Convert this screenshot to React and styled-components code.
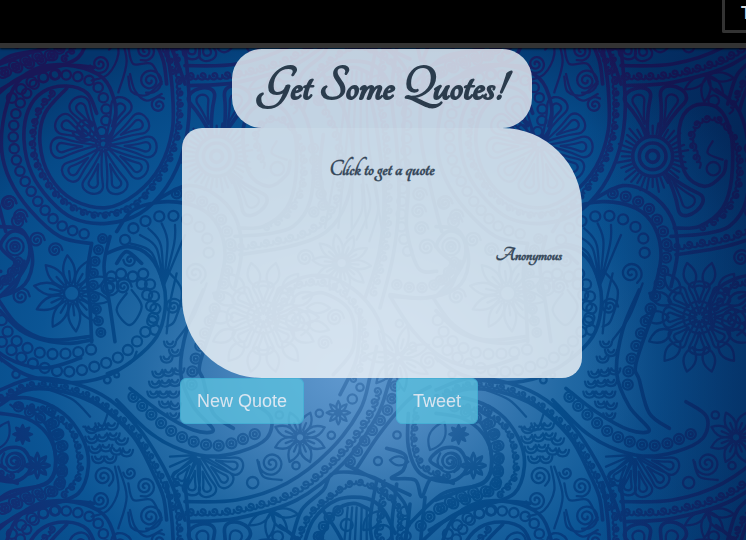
import React from "react";
import styled, { createGlobalStyle } from "styled-components";

const GlobalStyle = createGlobalStyle`
  *, *::before, *::after { box-sizing: border-box; }
  body { margin: 0; background: #04407c; color: #2c3e50; }
`;

const Page = styled.div`
  position: relative;
  isolation: isolate;
  min-height: 100vh;
  overflow: hidden;
  font-family: "Liberation Sans", Arial, sans-serif;
`;

const Backdrop = styled.svg`
  position: absolute;
  inset: 0;
  z-index: -1;
  width: 100%;
  height: 100%;
`;

const TopBar = styled.header`
  display: flex;
  justify-content: flex-end;
  align-items: flex-start;
  height: 48px;
  overflow: hidden;
  background: #000;
  border-bottom: 5px solid #333;
  box-shadow: 0 1px 2px rgba(0, 0, 0, 0.8);
`;

const MenuButton = styled.button`
  width: 56px;
  height: 33px;
  margin-right: -32px;
  padding: 0 0 4px 16px;
  border: 3px solid #333;
  border-top: 0;
  border-radius: 0 0 2px 2px;
  background: #000;
  color: #ddd;
  font: bold 18px/24px "Liberation Sans", Arial, sans-serif;
  text-align: left;
`;

const Main = styled.main`
  display: flex;
  flex-direction: column;
  align-items: center;
  padding: 1px 0 0 18px;
`;

const Title = styled.h1`
  width: 300px;
  max-width: 100%;
  margin: 0;
  padding: 16px 0 19px;
  border-radius: 30px;
  background: rgba(236, 240, 245, 0.82);
  color: #2b3c4d;
  font: bold 51px/44px Tangerine, "Liberation Serif", serif;
  -webkit-text-stroke: 2px #2b3c4d;
  text-align: center;
  white-space: nowrap;
`;

const QuoteCard = styled.section`
  width: 400px;
  max-width: 100%;
  min-height: 250px;
  padding: 28px 20px;
  border-radius: 20px 80px 20px 80px;
  background: rgba(236, 242, 247, 0.84);
  color: #2f4153;
`;

const QuoteText = styled.p`
  min-height: 86px;
  margin: 0;
  font: bold 22px/28px Tangerine, "Liberation Serif", serif;
  -webkit-text-stroke: 1px rgba(47, 65, 83, 0.7);
  text-align: center;
`;

const Author = styled(QuoteText)`
  min-height: 28px;
  font-size: 19px;
  text-align: right;
`;

const Actions = styled.div`
  display: flex;
  gap: 92px;
  width: 404px;
  max-width: 100%;
`;

const ActionButton = styled.button`
  height: 46px;
  padding: 0 16px;
  border: 1px solid #46b8da;
  border-radius: 6px;
  background: #5bc0de;
  color: #fff;
  opacity: 0.8;
  font: 18px/24px "Liberation Sans", Arial, sans-serif;
  cursor: pointer;
`;

/* ---------- paisley drawing ---------- */

const spline = (p) => {
  let d = `M${p[0]}`;
  for (let i = 0; i < p.length - 1; i++) {
    const a = p[i - 1] || p[i];
    const b = p[i];
    const c = p[i + 1];
    const e = p[i + 2] || c;
    d += `C${b[0] + (c[0] - a[0]) / 6},${b[1] + (c[1] - a[1]) / 6} ${c[0] - (e[0] - b[0]) / 6},${c[1] - (e[1] - b[1]) / 6} ${c}`;
  }
  return d;
};

const along = (p, gap) => {
  const dense = [];
  for (let i = 0; i < p.length - 1; i++) {
    const a = p[i - 1] || p[i];
    const b = p[i];
    const c = p[i + 1];
    const e = p[i + 2] || c;
    for (let s = 0; s < 60; s++) {
      const t = s / 60;
      dense.push([0, 1].map((k) =>
        0.5 * (2 * b[k] + (c[k] - a[k]) * t + (2 * a[k] - 5 * b[k] + 4 * c[k] - e[k]) * t * t + (3 * b[k] - a[k] - 3 * c[k] + e[k]) * t * t * t)
      ));
    }
  }
  const out = [];
  let run = gap;
  for (let i = 1; i < dense.length; i++) {
    const dx = dense[i][0] - dense[i - 1][0];
    const dy = dense[i][1] - dense[i - 1][1];
    run += Math.hypot(dx, dy);
    if (run >= gap) {
      out.push([dense[i][0], dense[i][1], Math.atan2(dy, dx)]);
      run -= gap;
    }
  }
  return out;
};

const circle = (x, y, r) => `M${x - r},${y}a${r},${r} 0 1 0 ${2 * r},0a${r},${r} 0 1 0 ${-2 * r},0`;

const spiral = (x, y, r, turns = 2, start = 0) => {
  const pts = [];
  const n = Math.ceil(turns * 10);
  for (let i = 0; i <= n; i++) {
    const t = i / n;
    const a = start + t * turns * Math.PI * 2;
    pts.push([x + Math.cos(a) * r * (0.12 + 0.88 * t), y + Math.sin(a) * r * (0.12 + 0.88 * t)]);
  }
  return spline(pts);
};

const petal = (x, y, a, from, len, w, pointed) => {
  const q = (u, v) => `${x + Math.cos(a) * u - Math.sin(a) * v},${y + Math.sin(a) * u + Math.cos(a) * v}`;
  return pointed
    ? `M${q(from, 0)}C${q(from + len * 0.3, w)} ${q(from + len * 0.65, w)} ${q(from + len, 0)}C${q(from + len * 0.65, -w)} ${q(from + len * 0.3, -w)} ${q(from, 0)}`
    : `M${q(from, 0)}C${q(from + len * 0.7, w * 0.6)} ${q(from + len * 0.7, w)} ${q(from + len * 0.82, w)}C${q(from + len * 1.06, w)} ${q(from + len * 1.06, -w)} ${q(from + len * 0.82, -w)}C${q(from + len * 0.7, -w)} ${q(from + len * 0.7, -w * 0.6)} ${q(from, 0)}`;
};

const beads = (p, gap = 36, r = 12) => along(p, gap).map(([x, y]) => circle(x, y, r)).join("");
const rings = (p, gap = 37, r = 14) => along(p, gap).map(([x, y]) => circle(x, y, r) + circle(x, y, r * 0.4)).join("");
const scrolls = (p, gap = 34, r = 12) =>
  along(p, gap).map(([x, y, a]) => {
    const end = a + Math.PI;
    return spiral(x, y, r, 1.3, end - 1.3 * Math.PI * 2) + `M${x + Math.cos(end) * r},${y + Math.sin(end) * r}Q${x + Math.cos(a + 2.2) * r * 1.7},${y + Math.sin(a + 2.2) * r * 1.7} ${x + Math.cos(a + 3) * gap * 0.9},${y + Math.sin(a + 3) * gap * 0.9}`;
  }).join("");

const daisy = (x, y, r, n = 8, w = 0.24, core = 0.18, turn = 0) => {
  let d = core ? circle(x, y, r * core) : "";
  for (let i = 0; i < n; i++) {
    const a = turn + (i * Math.PI * 2) / n;
    d += petal(x, y, a, r * core, r * (1 - core), r * w, true);
    if (r > 50) d += `M${x + Math.cos(a) * r * 0.3},${y + Math.sin(a) * r * 0.3}L${x + Math.cos(a) * r * 0.58},${y + Math.sin(a) * r * 0.58}`;
  }
  return d;
};

const fan = (x, y, tips, w = 30) =>
  tips.map(([tx, ty]) => {
    const a = Math.atan2(ty - y, tx - x);
    const len = Math.hypot(tx - x, ty - y);
    return petal(x, y, a, len * 0.1, len * 0.9, w, false) + petal(x, y, a, len * 0.4, len * 0.48, w * 0.45, false);
  }).join("");

const scales = (cells, r = 17) =>
  cells.map(([x, y]) => `M${x - r},${y}q2,${r} ${r},${r}q${r - 2},0 ${r},${-r}M${x - r / 2},${y}q2,8 ${r / 2},8q${r / 2 - 2},0 ${r / 2},-8`).join("");

/* Each motif group is drawn at three times its final size. */
const motifs = [
  {
    x: 0, y: 40,
    bold: [
      spline([[500, 20], [517, 150], [517, 270], [480, 380], [410, 460], [320, 503], [220, 480], [150, 410], [120, 310], [135, 220], [200, 145]]),
      spline([[555, 20], [568, 200], [550, 330], [500, 440], [420, 520], [320, 550], [220, 535], [150, 480], [95, 400], [72, 300], [85, 210], [130, 155], [200, 138], [262, 160], [290, 220]]),
      spline([[318, 320], [343, 260], [345, 190], [310, 115], [220, 78], [120, 82], [50, 130], [14, 220], [5, 330], [30, 420], [90, 510], [180, 590], [270, 610]]),
      spline([[350, 575], [400, 510], [500, 485], [600, 505], [655, 560], [675, 650], [650, 770]]),
      spline([[470, 480], [560, 437], [640, 460], [705, 530], [725, 630], [705, 740]]),
      spline([[330, 590], [312, 680], [330, 800], [345, 905]]),
      spline([[275, 610], [262, 700], [270, 800], [275, 905]]),
      spline([[350, 670], [380, 635], [425, 670]]),
      spline([[0, 560], [65, 570], [90, 630], [65, 700], [0, 770]]),
    ],
    fine: [
      fan(310, 315, [[375, 175], [442, 238], [470, 322], [438, 400], [360, 460], [272, 460], [195, 412], [152, 325], [170, 240], [225, 175]], 31),
      circle(310, 312, 22), circle(310, 312, 11),
      scrolls([[530, 20], [542, 200], [525, 320], [475, 420], [400, 500], [300, 528], [210, 500], [140, 430], [97, 330], [110, 220], [165, 148]]),
      beads([[305, 275], [318, 240], [318, 205], [300, 150], [265, 120], [200, 105], [130, 112], [80, 160], [48, 220], [40, 300], [55, 380], [85, 440], [130, 505], [190, 560], [265, 585]], 35, 14),
      spiral(255, 268, 38, 2.3, 1), spiral(476, 195, 25, 1.7, 1),
      spiral(165, 630, 22, 2), spiral(25, 490, 24, 2), spiral(55, 545, 24, 2), spiral(110, 600, 24, 2),
      spline([[385, 110], [395, 155], [440, 165], [485, 125]]),
      rings([[308, 595], [285, 665], [280, 740], [295, 840], [310, 910]], 36, 13),
      beads([[375, 600], [405, 560], [445, 540], [490, 527], [535, 530], [575, 545], [612, 575], [627, 620], [620, 670]], 43, 15),
      rings([[530, 460], [570, 470], [632, 500], [672, 555], [692, 620], [680, 700], [650, 790], [615, 880], [580, 980], [575, 1040]], 40, 15),
      ...[[390, 610], [420, 585], [445, 565], [485, 550], [525, 555], [555, 585]].map(([x, y]) => spline([[x, y], [(x + 520) / 2, (y + 650) / 2 + 8], [490, 740]])),
      daisy(215, 760, 115, 10, 0.2, 0.2, 0.2),
      circle(45, 620, 26), circle(45, 620, 14), circle(45, 620, 6),
      rings([[55, 665], [30, 705], [-10, 740]], 35, 13),
      beads([[325, 745], [340, 700], [375, 705], [410, 715], [435, 750], [455, 805], [465, 870]], 36, 15),
      spiral(390, 660, 20, 1.5), spiral(370, 740, 25, 2), spiral(585, 700, 34, 2, 1), spiral(520, 800, 26, 2),
      spline([[530, 700], [510, 790], [500, 880]]), spline([[620, 730], [580, 830], [530, 900]]),
    ],
  },
  {
    x: 0, y: 290,
    bold: [
      spline([[0, 62], [60, 120], [130, 150], [210, 160], [275, 150]]),
      spline([[0, 205], [80, 255], [200, 278], [310, 262], [400, 210], [470, 140], [495, 60], [490, -20], [450, -100], [385, -130], [320, -110]]),
      spline([[0, 300], [100, 265], [220, 280], [330, 330], [420, 420], [490, 530], [530, 620], [555, 690]]),
      spline([[0, 345], [80, 300], [190, 305], [300, 350], [400, 440], [460, 550], [490, 620], [500, 690]]),
      spline([[0, 330], [90, 325], [190, 370], [250, 450], [265, 530], [235, 610], [150, 645], [60, 675], [-20, 720]]),
      spline([[0, 370], [80, 385], [140, 430], [167, 500], [150, 570], [80, 600], [0, 630]]),
      spline([[350, 330], [440, 420], [520, 470], [620, 498], [720, 485], [800, 445], [812, 380], [750, 335]]),
      spline([[390, 295], [480, 365], [580, 420], [640, 420], [580, 350], [542, 250], [560, 120], [610, 0]]),
      spline([[700, 415], [640, 370], [610, 270], [600, 220], [655, 60]]),
    ],
    fine: [
      beads([[5, 90], [30, 135], [75, 170], [130, 190], [210, 190], [290, 175]], 39, 15),
      beads([[5, 155], [60, 200], [110, 225], [170, 243], [230, 243], [290, 228], [350, 205], [400, 165], [440, 120], [465, 70], [460, 10], [440, -35], [410, -70]], 38, 15),
      scrolls([[0, 322], [90, 283], [205, 292], [310, 340], [410, 430], [475, 540], [512, 620], [525, 685]]),
      scrolls([[60, 345], [140, 360], [210, 410], [238, 480], [238, 560], [190, 620]], 33, 12),
      rings([[55, 350], [105, 375], [160, 410], [187, 460], [188, 520], [180, 580], [150, 610], [100, 625], [0, 660]], 37, 14),
      rings([[400, 320], [450, 370], [525, 430], [600, 460], [675, 465], [770, 430]], 38, 15),
      spiral(40, 515, 37, 2.3, 2), daisy(68, 433, 28, 8, 0.2, 0), daisy(112, 525, 37, 8, 0.2, 0),
      circle(48, 253, 11), circle(322, 270, 10), circle(350, 255, 7),
      spiral(310, 560, 32, 2, 1), spiral(435, 590, 31, 2, 2), spiral(300, 630, 30, 2, 3), spiral(450, 680, 38, 2.3), spiral(390, 548, 20, 1.5),
      spline([[345, 530], [355, 600], [325, 660], [275, 680]]), spline([[355, 530], [380, 620], [355, 715]]),
      spline([[385, 580], [400, 630], [455, 630], [485, 690]]), spline([[390, 660], [405, 710], [440, 740], [485, 720]]),
      scales([[275, 410], [305, 400], [335, 400], [275, 440], [307, 435], [340, 430], [365, 445], [285, 470], [318, 465], [350, 475], [380, 480], [295, 500], [330, 500]], 19),
      scales([[510, 155], [525, 180], [500, 200], [475, 245], [505, 240], [535, 235], [465, 275], [495, 272], [525, 270], [460, 305], [490, 305], [520, 305], [495, 335], [525, 340], [520, 370]], 18),
      spline([[150, 300], [220, 330], [270, 380]]), spline([[250, 410], [300, 420], [325, 365]]), spline([[320, 250], [390, 220], [410, 185]]),
      spline([[395, 0], [425, 50], [390, 105], [350, 60], [380, 10]]), spline([[500, -60], [545, 0], [525, 90], [500, 110]]),
      circle(330, -10, 26), circle(330, -10, 12),
    ],
  },
  {
    x: 180, y: 128,
    bold: [
      spline([[175, 300], [250, 295], [320, 240], [347, 150], [345, 20], [305, -60], [230, -65], [190, 0], [205, 130], [265, 175], [320, 140], [330, 100]]),
      spline([[165, 325], [260, 318], [340, 295], [390, 220], [400, 80], [370, -50], [300, -115]]),
      spline([[180, 380], [330, 355], [440, 310], [500, 220], [520, 80], [490, -60], [430, -160]]),
      spline([[590, -250], [570, -120], [590, 0], [612, 200], [598, 370], [555, 510]]),
      spline([[650, -240], [635, -100], [650, 50], [657, 220], [640, 380], [600, 540]]),
      spline([[290, 600], [285, 510], [350, 455], [440, 445], [540, 500], [605, 600], [620, 750]]),
      spline([[370, 510], [430, 495], [510, 550], [520, 660], [460, 740]]),
      spline([[430, 20], [420, 130], [440, 240]]),
      spline([[540, 560], [530, 690], [480, 800]]),
      spline([[630, 505], [700, 610], [790, 690], [900, 720], [1010, 690]]),
      spline([[635, 505], [740, 510], [810, 480], [840, 400]]),
      circle(110, 85, 60), circle(110, 85, 40), circle(110, 85, 18),
      petal(110, 85, -1.82, 65, 145, 40, false), petal(110, 85, -1.24, 65, 155, 40, false), petal(110, 85, 0.9, 65, 145, 42, false),
    ],
    fine: [
      petal(110, 85, -1.82, 100, 90, 18, false), petal(110, 85, -1.24, 100, 95, 18, false), petal(110, 85, 0.9, 100, 90, 20, false),
      ...Array.from({ length: 36 }, (_, i) => {
        const a = (i * Math.PI) / 18;
        return `M${110 + 68 * Math.cos(a)},${85 + 68 * Math.sin(a)}L${110 + (92 + (i % 3) * 8) * Math.cos(a)},${85 + (92 + (i % 3) * 8) * Math.sin(a)}`;
      }),
      scrolls([[240, 90], [225, 20], [260, -25], [320, -20], [368, 60], [368, 180], [320, 265], [250, 305]], 36, 13),
      scrolls([[180, 355], [290, 337], [380, 310], [450, 250], [480, 150], [465, 20], [400, -110]], 38, 14),
      rings([[400, 60], [415, 170], [430, 230], [385, 260]], 35, 14),
      spline([[290, 40], [275, 75], [320, 95]]), circle(292, 122, 20),
      scrolls([[615, -220], [602, -100], [620, 20], [628, 200], [618, 360], [575, 520]], 36, 14),
      beads([[675, -160], [680, 20], [668, 180], [665, 300], [690, 390]], 38, 14),
      daisy(485, 405, 88, 10, 0.2, 0.18, 0.1), spiral(375, 390, 26, 2), spiral(465, 570, 27, 2), spiral(433, 645, 22, 2), spiral(350, 580, 44, 2.2),
      ...Array.from({ length: 14 }, (_, i) => petal(250, 568, i * 0.449, 92, 75, 24, true)),
      fan(250, 568, [[250, 460], [330, 490], [360, 568], [330, 645], [250, 680], [170, 645], [140, 568], [170, 490]], 31),
      circle(250, 568, 48), circle(250, 568, 30), circle(250, 568, 15),
      scrolls([[310, 520], [350, 470], [440, 465], [520, 520], [555, 600], [550, 700], [510, 770]], 36, 14),
      spline([[545, 170], [545, 250], [500, 330]]), spline([[560, 170], [570, 240], [530, 335]]), spline([[580, 140], [595, 240], [568, 340]]),
      petal(380, 540, 0, 0, 70, 20, true), petal(380, 585, 0.3, 0, 70, 20, true),
    ],
  },
  {
    x: 340, y: 128,
    bold: [
      spline([[210, -180], [190, 20], [205, 170], [200, 300], [235, 420], [290, 430]]),
      spline([[255, -200], [240, 0], [270, 170], [305, 310]]),
      spline([[150, 500], [250, 510], [350, 480], [385, 410], [370, 330], [325, 310], [290, 355], [335, 400]]),
      spline([[280, 510], [340, 590], [430, 635], [560, 625]]),
    ],
    fine: [
      spiral(238, 200, 23, 2), spiral(235, 250, 23, 2), spiral(243, 302, 22, 2), spiral(260, 358, 26, 2), spiral(350, 505, 27, 2), spiral(315, 225, 22, 2), spiral(348, 265, 22, 2),
      rings([[170, 470], [235, 480], [310, 458], [350, 400]], 38, 14),
      circle(218, 655, 11), circle(178, 587, 11), spiral(265, 700, 28, 2),
      daisy(175, 690, 100, 7, 0.2, 0.1, -1.3),
      ...[-110, -70, -30, 15, 60].map((x) => spline([[60 + x / 3, -170], [55 + x / 2, 40], [65 + x, 300]])),
    ],
  },
  {
    x: 170, y: 360,
    bold: [
      spline([[45, 425], [200, 420], [350, 370], [480, 270], [570, 150], [600, 50], [620, -40]]),
      spline([[55, 485], [200, 475], [380, 420], [520, 310], [620, 170], [660, 60], [690, 0]]),
      spline([[365, 540], [395, 450], [460, 390], [490, 340], [590, 345], [670, 390], [715, 460], [700, 560]]),
      spline([[400, 560], [430, 480], [500, 420], [590, 415], [640, 450], [675, 520]]),
      spline([[450, 540], [495, 455], [550, 430], [600, 450]]),
      spline([[560, 325], [630, 220], [715, 120], [780, 80]]),
      spline([[715, 160], [715, 260], [750, 340], [840, 365], [890, 325], [870, 270], [820, 265], [780, 300], [815, 325]]),
      spline([[650, 265], [705, 285], [700, 330], [665, 355], [735, 360], [755, 410], [785, 355], [850, 370]]),
      spline([[720, 490], [820, 400], [940, 370], [965, 300], [940, 200], [890, 150]]),
      spline([[760, 540], [850, 465], [970, 425], [1080, 430]]),
      spline([[530, 315], [590, 345], [635, 365], [720, 405]]),
    ],
    fine: [
      scrolls([[60, 455], [200, 448], [370, 395], [500, 290], [595, 165], [630, 60]], 36, 14),
      rings([[540, 305], [600, 220], [655, 145], [680, 60]], 38, 14),
      daisy(390, 232, 80, 8, 0.25, 0.16, 0.4), daisy(505, 158, 35, 8, 0.22, 0), daisy(865, 222, 24, 8, 0.2, 0), daisy(910, 318, 37, 8, 0.22, 0),
      circle(547, 117, 14), circle(484, 226, 11), circle(378, 317, 11), circle(328, 165, 11), circle(448, 160, 11), circle(570, 82, 11), circle(248, 368, 17), circle(624, 303, 12), circle(681, 225, 11), circle(530, 495, 18),
      spiral(304, 310, 38, 2.2, 2), spline([[262, 300], [280, 350], [335, 360]]),
      fan(85, 285, [[20, 370], [60, 405], [118, 410], [182, 375], [218, 325]], 26),
      ...[[0, 290], [0, 320], [5, 350]].map(([x, y]) => `M80,285L${x},${y}`),
      circle(323, 530, 16),
      petal(305, 455, 0.1, 0, 80, 18, true), petal(305, 455, 0.9, 0, 75, 18, true), petal(305, 455, 1.7, 0, 80, 18, true), petal(305, 455, 2.6, 0, 80, 18, true),
      scrolls([[380, 540], [420, 460], [490, 400], [560, 365], [640, 395], [690, 450], [690, 540]], 34, 12),
      rings([[445, 530], [480, 470], [530, 440]], 33, 14),
      scrolls([[740, 170], [735, 250], [765, 320], [840, 350]], 33, 12), spiral(842, 305, 33, 2.2),
      petal(780, 270, -1.1, 0, 95, 30, true), petal(580, 510, -0.8, 0, 80, 25, true),
      rings([[950, 150], [970, 230], [985, 310], [970, 385], [910, 397], [850, 420], [790, 460], [750, 500]], 38, 15),
      beads([[965, 450], [900, 470], [850, 505], [810, 550]], 38, 15),
      circle(640, 520, 25), petal(660, 300, 0.1, 0, 55, 18, true),
    ],
  },
];

const TILE = 436;
const offsets = [-TILE, 0, TILE];

function PaisleyBackdrop() {
  return (
    <Backdrop aria-hidden="true">
      <defs>
        <radialGradient id="field" cx="47%" cy="69%" r="68%">
          <stop offset="0" stopColor="#6099cf" />
          <stop offset="0.2" stopColor="#4a86be" />
          <stop offset="0.42" stopColor="#2269a4" />
          <stop offset="0.62" stopColor="#0b5595" />
          <stop offset="0.82" stopColor="#064a88" />
          <stop offset="1" stopColor="#04356c" />
        </radialGradient>
        <radialGradient id="line" cx="47%" cy="69%" r="68%">
          <stop offset="0" stopColor="#4079b2" />
          <stop offset="0.2" stopColor="#2a65a1" />
          <stop offset="0.42" stopColor="#034a88" />
          <stop offset="0.6" stopColor="#063a7b" />
          <stop offset="0.78" stopColor="#152a70" />
          <stop offset="1" stopColor="#1d1455" />
        </radialGradient>
        <linearGradient id="edge">
          <stop offset="0.78" stopColor="#02103a" stopOpacity="0" />
          <stop offset="1" stopColor="#02103a" stopOpacity="0.4" />
        </linearGradient>
        <g id="motifs" fill="none" stroke="#fff" strokeLinecap="round" strokeLinejoin="round">
          {motifs.map((m) => (
            <g key={`${m.x}-${m.y}`} transform={`translate(${m.x} ${m.y}) scale(${1 / 3})`}>
              <path d={m.bold.join("")} strokeWidth="11" />
              <path d={m.fine.join("")} strokeWidth="7" />
            </g>
          ))}
        </g>
        <pattern id="paisley" width={TILE} height={TILE} patternUnits="userSpaceOnUse">
          {offsets.flatMap((x) => offsets.map((y) => <use key={`${x},${y}`} href="#motifs" x={x} y={y} />))}
        </pattern>
        <mask id="lines">
          <rect width="100%" height="100%" fill="url(#paisley)" />
        </mask>
      </defs>
      <rect width="100%" height="100%" fill="url(#field)" />
      <rect width="100%" height="100%" fill="url(#line)" mask="url(#lines)" opacity="0.88" />
      <rect width="100%" height="100%" fill="url(#edge)" />
    </Backdrop>
  );
}

export default function App() {
  return (
    <Page>
      <GlobalStyle />
      <PaisleyBackdrop />
      <TopBar>
        <MenuButton type="button">T</MenuButton>
      </TopBar>
      <Main>
        <Title>Get Some Quotes!</Title>
        <QuoteCard>
          <QuoteText>Click to get a quote</QuoteText>
          <Author>Anonymous</Author>
        </QuoteCard>
        <Actions>
          <ActionButton type="button">New Quote</ActionButton>
          <ActionButton type="button">Tweet</ActionButton>
        </Actions>
      </Main>
    </Page>
  );
}
